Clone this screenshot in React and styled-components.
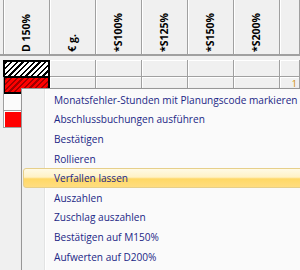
import React from "react";
import styled, { createGlobalStyle } from "styled-components";

/* COLORS */
const colorFace = "#f0f0f0";
const colorLine = "#a0a0a0";
const colorMenuText = "#1c2786";

const GlobalStyle = createGlobalStyle`
    html, body {
        margin: 0;
        padding: 0;
        background: ${colorFace};
        overflow: hidden;
    }
`;

const Page = styled.div`
    position: relative;
    width: 300px;
    height: 270px;
    overflow: hidden;
    background: ${colorFace};
    font-family: "Open Sans", "Noto Sans", sans-serif;
`;

const HeaderRow = styled.div`
    display: grid;
    grid-template-columns: 4px repeat(6, 46px) 1fr;
    height: 54px;
    border-bottom: 2px solid ${colorLine};
`;

const Gutter = styled.div`
    border-right: 1px solid ${colorLine};
`;

const HeaderCell = styled.div`
    display: flex;
    flex-direction: column;
    align-items: center;
    justify-content: flex-end;
    padding-bottom: 2px;
    border-right: 1px solid ${colorLine};
    box-shadow: inset 1px 0 #fff;
`;

const VerticalLabel = styled.span`
    writing-mode: vertical-rl;
    transform: rotate(180deg);
    font-size: 10.5px;
    font-weight: 700;
    line-height: 1;
    color: #000;
    white-space: nowrap;
`;

const Spacer = styled.div`
    height: 4px;
`;

const Body = styled.div`
    display: grid;
    grid-template-columns: 4px repeat(6, 46px) 1fr;
    grid-auto-rows: 17px;
`;

const Cell = styled.div`
    border-right: 1px solid ${colorLine};
    border-bottom: 1px solid ${colorLine};
    box-shadow: inset 1px 1px #fff;
    background: ${(p) => (p.$tone === "white" ? "#fbfbfb" : p.$tone === "red" ? "#ff0000" : colorFace)};
    position: relative;
`;

const Mark = styled.span`
    position: absolute;
    right: 2px;
    top: 2px;
    font-size: 9px;
    line-height: 1;
    color: #d08a00;
`;

const Selection = styled.div`
    grid-column: 2;
    grid-row: 1 / span 2;
    margin-left: -1px;
    border: 2px solid #000;
    display: flex;
    flex-direction: column;
`;

const Hatch = styled.div`
    flex: 1;
    background: ${(p) =>
        p.$red
            ? "repeating-linear-gradient(135deg, #a00000 0 1.5px, #ff0000 1.5px 4px)"
            : "repeating-linear-gradient(135deg, #000 0 1.5px, #fff 1.5px 4px)"};
    border-bottom: ${(p) => (p.$red ? "none" : "2px solid #000")};
`;

const Menu = styled.div`
    position: absolute;
    left: 21px;
    top: 88px;
    width: 300px;
    height: 200px;
    padding: 1px;
    border: 1px solid #979797;
    background: linear-gradient(
        90deg,
        #f0f1f1 0 22px,
        #e2e3e3 22px 23px,
        #ffffff 23px 24px,
        #fafafa 24px
    );
    box-shadow: 1px 1px 2px rgba(0, 0, 0, 0.2);
`;

const MenuItem = styled.div`
    height: 19.6px;
    display: flex;
    align-items: center;
    padding-left: 30px;
    box-sizing: border-box;
    font-size: 10.1px;
    color: ${colorMenuText};
    white-space: nowrap;
    border: 1px solid ${(p) => (p.$active ? "#e6cf8a" : "transparent")};
    border-radius: 3px;
    background: ${(p) =>
        p.$active
            ? "linear-gradient(#fffae6 0%, #fff2c6 45%, #ffd866 55%, #ffdd80 100%)"
            : "transparent"};
`;

const columns = ["D 150%", "€ g.", "*S100%", "*S125%", "*S150%", "*S200%"];

const menuItems = [
    "Monatsfehler-Stunden mit Planungscode markieren",
    "Abschlussbuchungen ausführen",
    "Bestätigen",
    "Rollieren",
    "Verfallen lassen",
    "Auszahlen",
    "Zuschlag auszahlen",
    "Bestätigen auf M150%",
    "Aufwerten auf D200%",
];

function App() {
    return (
        <Page>
            <GlobalStyle />
            <HeaderRow>
                <Gutter />
                {columns.map((c) => (
                    <HeaderCell key={c}>
                        <VerticalLabel>{c}</VerticalLabel>
                    </HeaderCell>
                ))}
                <HeaderCell />
            </HeaderRow>
            <Spacer />
            <Body>
                <Gutter />
                <Selection>
                    <Hatch />
                    <Hatch $red />
                </Selection>
                {[0, 1, 2, 3, 4, 5].map((i) => (
                    <Cell key={"a" + i} />
                ))}
                <Gutter />
                {[0, 1, 2, 3, 4].map((i) => (
                    <Cell key={"b" + i} />
                ))}
                <Cell>
                    <Mark>1</Mark>
                </Cell>
                <Gutter />
                <Cell $tone="white" />
                {[0, 1, 2, 3, 4, 5].map((i) => (
                    <Cell key={"c" + i} />
                ))}
                <Gutter />
                <Cell $tone="red" />
                {[0, 1, 2, 3, 4, 5].map((i) => (
                    <Cell key={"d" + i} />
                ))}
            </Body>
            <Menu>
                {menuItems.map((item) => (
                    <MenuItem key={item} $active={item === "Verfallen lassen"}>
                        {item}
                    </MenuItem>
                ))}
            </Menu>
        </Page>
    );
}

export default App;
